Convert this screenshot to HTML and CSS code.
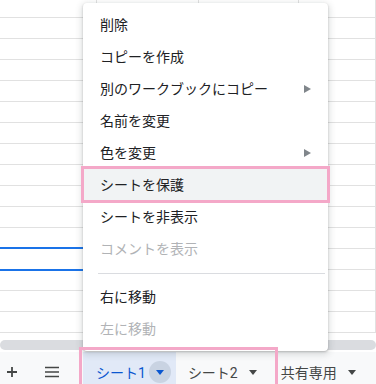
FILE: index.html
```html
<!DOCTYPE html>
<html lang="ja">
<head>
<meta charset="utf-8">
<link rel="stylesheet" href="styles.css">
</head>
<body>
<div class="app">
  <div class="grid">
    <div class="row first"><div class="cell"></div><div class="cell"></div><div class="cell"></div><div class="cell"></div></div>
    <div class="row"><div class="cell"></div><div class="cell"></div><div class="cell"></div><div class="cell"></div></div>
    <div class="row"><div class="cell"></div><div class="cell"></div><div class="cell"></div><div class="cell"></div></div>
    <div class="row"><div class="cell"></div><div class="cell"></div><div class="cell"></div><div class="cell"></div></div>
    <div class="row"><div class="cell"></div><div class="cell"></div><div class="cell"></div><div class="cell"></div></div>
    <div class="row"><div class="cell"></div><div class="cell"></div><div class="cell"></div><div class="cell"></div></div>
    <div class="row"><div class="cell"></div><div class="cell"></div><div class="cell"></div><div class="cell"></div></div>
    <div class="row"><div class="cell"></div><div class="cell"></div><div class="cell"></div><div class="cell"></div></div>
    <div class="row"><div class="cell"></div><div class="cell"></div><div class="cell"></div><div class="cell"></div></div>
    <div class="row"><div class="cell"></div><div class="cell"></div><div class="cell"></div><div class="cell"></div></div>
    <div class="row"><div class="cell"></div><div class="cell"></div><div class="cell"></div><div class="cell"></div></div>
    <div class="row"><div class="cell"></div><div class="cell"></div><div class="cell"></div><div class="cell"></div></div>
    <div class="row sel"><div class="cell"></div><div class="cell"></div><div class="cell"></div><div class="cell"></div></div>
    <div class="row"><div class="cell"></div><div class="cell"></div><div class="cell"></div><div class="cell"></div></div>
    <div class="row"><div class="cell"></div><div class="cell"></div><div class="cell"></div><div class="cell"></div></div>
    <div class="row"><div class="cell"></div><div class="cell"></div><div class="cell"></div><div class="cell"></div></div>
  </div>
  <div class="hscroll"><div class="thumb"></div></div>
  <div class="tabbar">
    <div class="iconbtn btn-add">
      <svg width="12" height="12" viewBox="0 0 12 12"><path d="M6 1v10M1 6h10" stroke="#444746" stroke-width="1.8" fill="none"/></svg>
    </div>
    <div class="iconbtn btn-list">
      <svg width="14" height="12" viewBox="0 0 14 12"><path d="M0 1.5h14M0 6h14M0 10.5h14" stroke="#444746" stroke-width="1.6" fill="none"/></svg>
    </div>
    <div class="tab active">
      <span class="tab-name">シート1</span>
      <span class="tab-drop"><svg width="8" height="5" viewBox="0 0 8 5"><path d="M0 0h8L4 5z" fill="#0b57d0"/></svg></span>
    </div>
    <div class="tab">
      <span class="tab-name">シート2</span>
      <span class="tab-caret"><svg width="8" height="5" viewBox="0 0 8 5"><path d="M0 0h8L4 5z" fill="#444746"/></svg></span>
    </div>
    <div class="tab">
      <span class="tab-name">共有専用</span>
      <span class="tab-caret"><svg width="8" height="5" viewBox="0 0 8 5"><path d="M0 0h8L4 5z" fill="#444746"/></svg></span>
    </div>
  </div>
</div>

<div class="menu">
  <div class="item">削除</div>
  <div class="item">コピーを作成</div>
  <div class="item"><span>別のワークブックにコピー</span><svg class="sub" width="7" height="8" viewBox="0 0 7 8"><path d="M0 0l7 4-7 4z" fill="#80868b"/></svg></div>
  <div class="item">名前を変更</div>
  <div class="item"><span>色を変更</span><svg class="sub" width="7" height="8" viewBox="0 0 7 8"><path d="M0 0l7 4-7 4z" fill="#80868b"/></svg></div>
  <div class="item hover">シートを保護</div>
  <div class="item">シートを非表示</div>
  <div class="item disabled">コメントを表示</div>
  <div class="sep"></div>
  <div class="item">右に移動</div>
  <div class="item disabled">左に移動</div>
</div>

<div class="mark mark-item"></div>
<div class="mark mark-tabs"></div>
</body>
</html>
```

FILE: styles.css
```css
html, body {
  margin: 0;
  padding: 0;
}
body {
  width: 376px;
  height: 384px;
  overflow: hidden;
  position: relative;
  background: #fff;
  font-family: Roboto, "Noto Sans CJK JP", sans-serif;
  color: #202124;
}
.app {
  display: flex;
  flex-direction: column;
}
.grid {
  height: 338px;
  overflow: hidden;
  flex: none;
}
.row {
  display: grid;
  grid-template-columns: 97px 102px 100px 1fr;
  height: 21px;
  box-sizing: border-box;
  border-bottom: 1px solid #e1e1e1;
  position: relative;
}
.row.first {
  height: 18px;
}
.cell {
  border-right: 1px solid #e1e1e1;
}
.row.sel::after {
  content: "";
  position: absolute;
  left: -4px;
  width: 240px;
  top: -2px;
  bottom: -2px;
  border: 2px solid #1a73e8;
}
.hscroll {
  height: 14px;
  padding: 2px 0;
  box-sizing: border-box;
  flex: none;
}
.thumb {
  height: 10px;
  border-radius: 5px;
  background: #dadce0;
}
.tabbar {
  height: 40px;
  flex: none;
  background: #f8f9fa;
  display: flex;
  align-items: center;
  font-size: 14px;
}
.iconbtn {
  width: 24px;
  height: 24px;
  display: flex;
  justify-content: center;
  align-items: center;
  flex: none;
}
.btn-list {
  margin-left: 16px;
  margin-right: 19px;
}
.tab {
  display: flex;
  align-items: center;
  height: 40px;
  padding: 0 12px;
  color: #444746;
  flex: none;
}
.tab.active {
  background: #e1e9f7;
  color: #0b57d0;
  padding: 0 5px 0 13px;
}
.tab-drop {
  width: 22px;
  height: 22px;
  border-radius: 50%;
  background: #c9d3e2;
  display: flex;
  align-items: center;
  justify-content: center;
  margin-left: 3px;
}
.tab-caret {
  display: flex;
  margin-left: 11px;
}
.menu {
  position: absolute;
  left: 83px;
  top: 3px;
  width: 245px;
  padding: 6px 0;
  background: #fff;
  border-radius: 4px;
  box-shadow: 0 2px 6px 2px rgba(60, 64, 67, 0.15), 0 1px 2px rgba(60, 64, 67, 0.3);
  font-size: 14px;
  z-index: 2;
}
.item {
  height: 32px;
  line-height: 32px;
  padding: 0 17px;
  display: flex;
  align-items: center;
  justify-content: space-between;
}
.item.hover {
  background: #f1f3f4;
}
.item.disabled {
  color: #b1b3b6;
}
.sep {
  height: 1px;
  background: #dadce0;
  margin: 8px 3px 7px 15px;
}
.mark {
  position: absolute;
  border: 3px solid #f4a8c8;
  z-index: 3;
  box-sizing: border-box;
}
.mark-item {
  left: 81px;
  top: 166px;
  width: 249px;
  height: 37px;
}
.mark-tabs {
  left: 79px;
  top: 347px;
  width: 199px;
  height: 45px;
}
```
